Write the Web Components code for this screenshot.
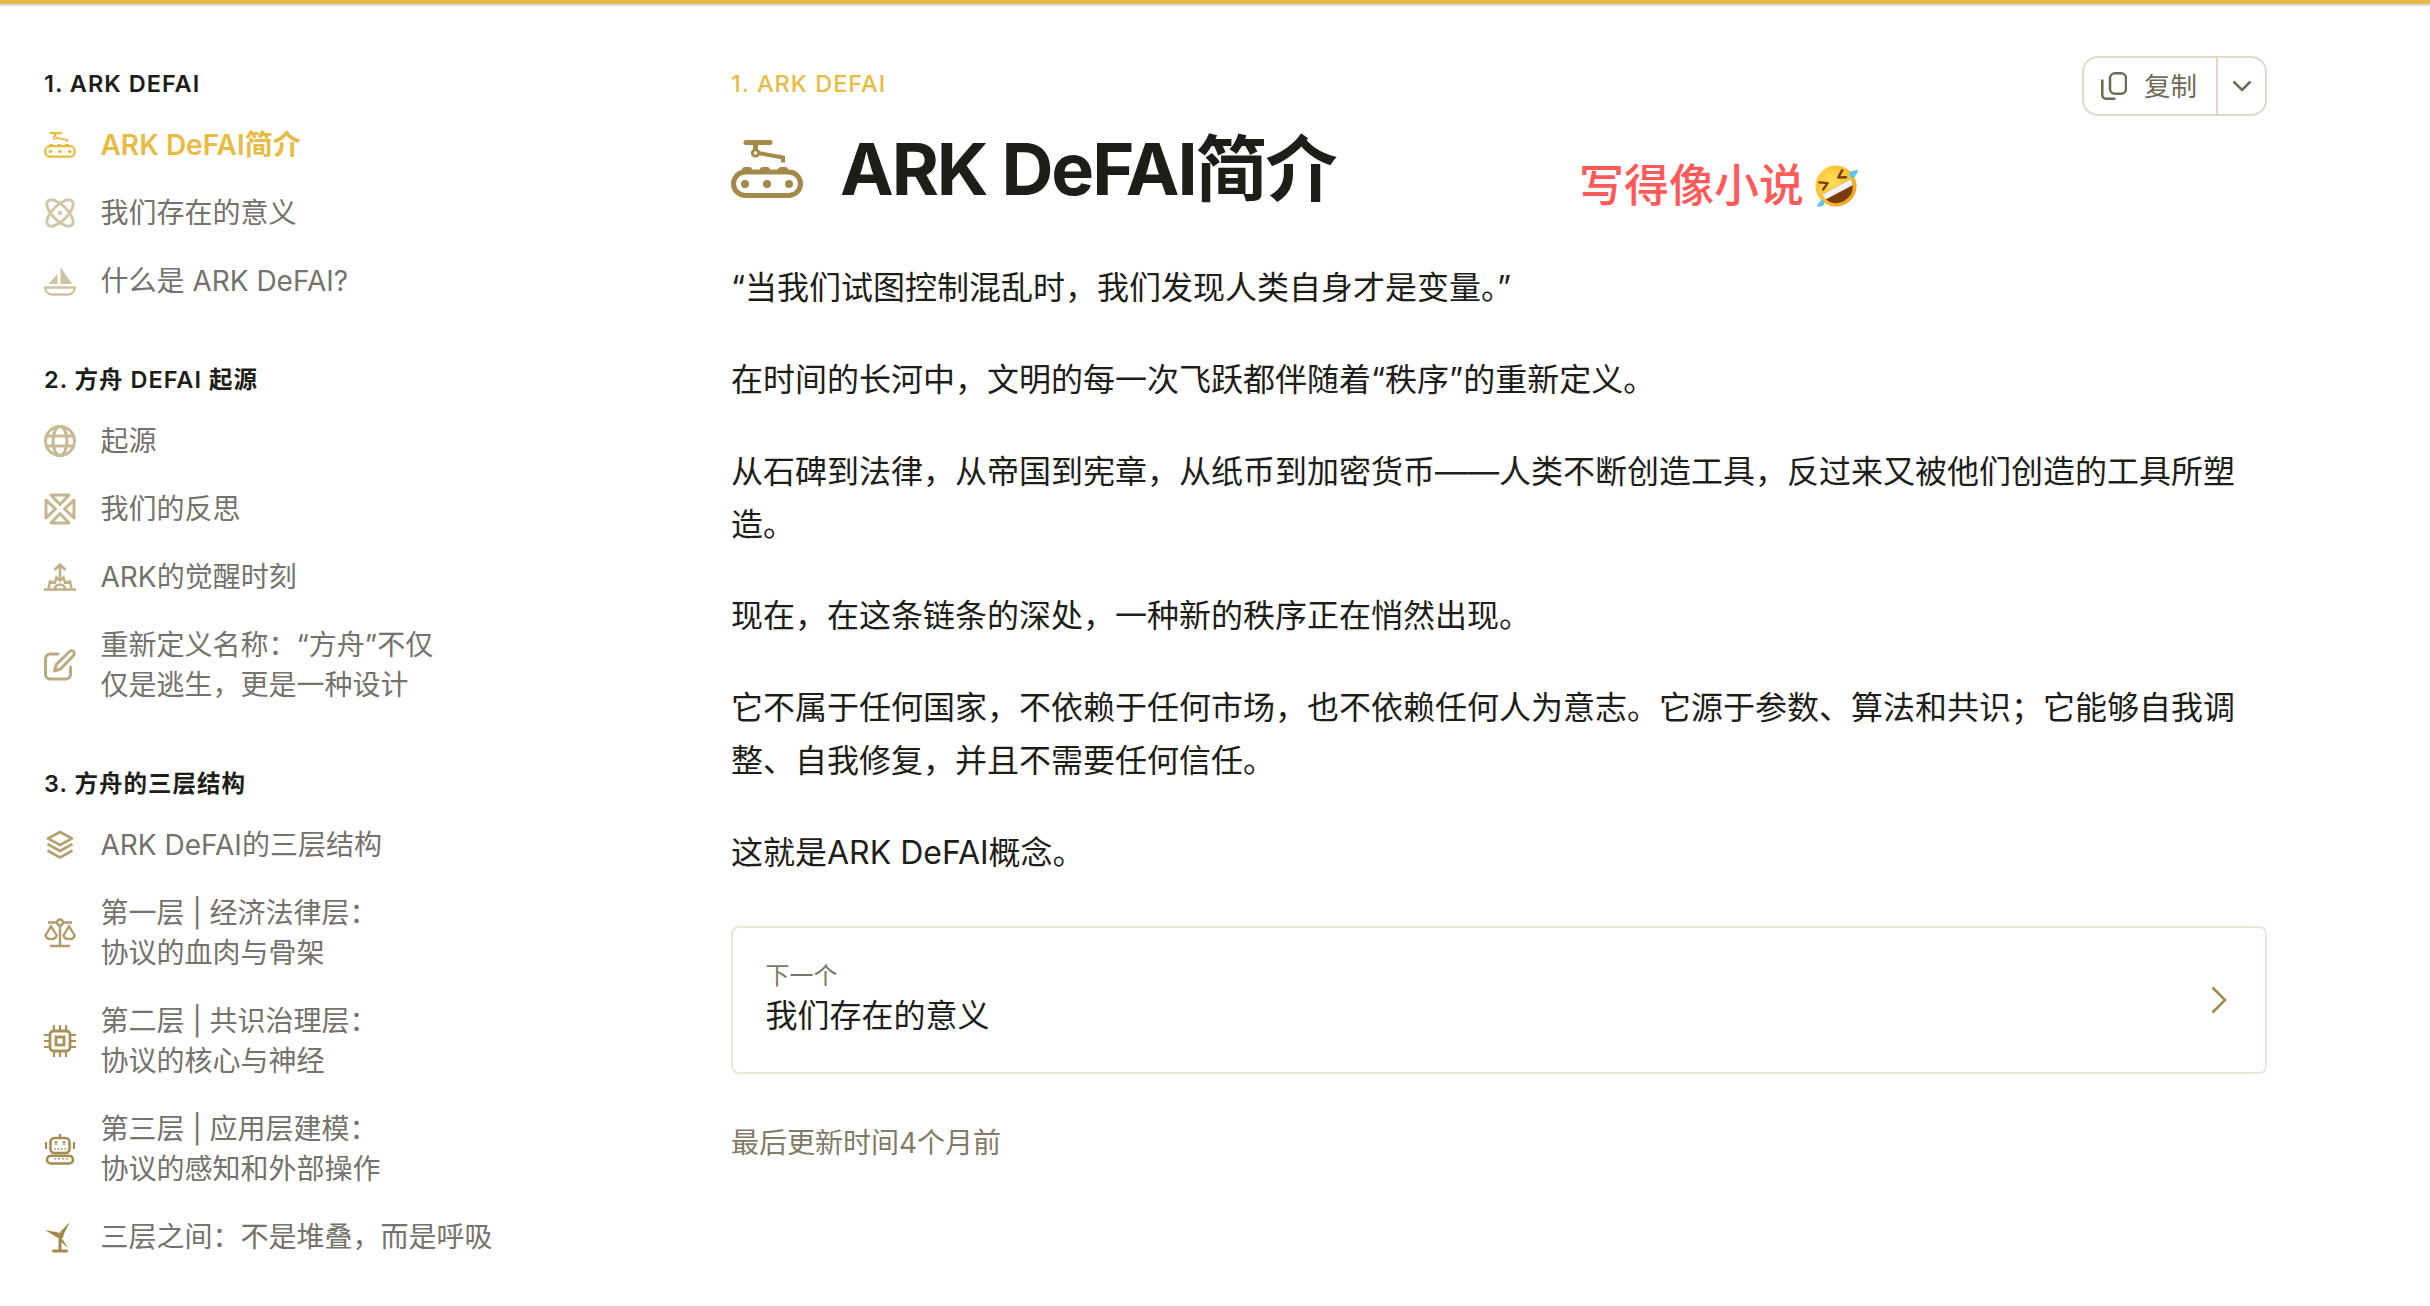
<!DOCTYPE html>
<html lang="zh-CN">
<head>
<meta charset="utf-8">
<title>ARK DeFAI简介</title>
<style>
html,body{margin:0;padding:0;background:#fff;}
body{font-family:Inter,"Noto Sans CJK SC",sans-serif;color:#1e1e19;}
</style>
</head>
<body>
<doc-page>
  <side-nav slot="nav">
    <nav-group label="1. ARK DEFAI">
      <nav-item icon="conveyor" tint="#e8bb42" active>ARK DeFAI简介</nav-item>
      <nav-item icon="atom" tint="#d2c7a9">我们存在的意义</nav-item>
      <nav-item icon="boat" tint="#cfc3a2">什么是 ARK DeFAI?</nav-item>
    </nav-group>
    <nav-group label="2. 方舟 DEFAI 起源">
      <nav-item icon="globe" tint="#c8ba95">起源</nav-item>
      <nav-item icon="cross" tint="#c5b68f">我们的反思</nav-item>
      <nav-item icon="rise" tint="#c0b088">ARK的觉醒时刻</nav-item>
      <nav-item icon="edit" tint="#bcab80" two>重新定义名称：“方舟”不仅<br>仅是逃生，更是一种设计</nav-item>
    </nav-group>
    <nav-group label="3. 方舟的三层结构">
      <nav-item icon="layers" tint="#b5a272">ARK DeFAI的三层结构</nav-item>
      <nav-item icon="scale" tint="#b09c68" two>第一层 | 经济法律层：<br>协议的血肉与骨架</nav-item>
      <nav-item icon="chip" tint="#a8925a" two>第二层 | 共识治理层：<br>协议的核心与神经</nav-item>
      <nav-item icon="robot" tint="#a48c51" two>第三层 | 应用层建模：<br>协议的感知和外部操作</nav-item>
      <nav-item icon="turbine" tint="#a0884a">三层之间：不是堆叠，而是呼吸</nav-item>
    </nav-group>
  </side-nav>
  <doc-article slot="main" eyebrow="1. ARK DEFAI" heading="ARK DeFAI简介">
    <p>“当我们试图控制混乱时，我们发现人类自身才是变量。”</p>
    <p>在时间的长河中，文明的每一次飞跃都伴随着“秩序”的重新定义。</p>
    <p>从石碑到法律，从帝国到宪章，从纸币到加密货币——人类不断创造工具，反过来又被他们创造的工具所塑造。</p>
    <p>现在，在这条链条的深处，一种新的秩序正在悄然出现。</p>
    <p>它不属于任何国家，不依赖于任何市场，也不依赖任何人为意志。它源于参数、算法和共识；它能够自我调整、自我修复，并且不需要任何信任。</p>
    <p>这就是ARK DeFAI概念。</p>
  </doc-article>
</doc-page>

<script>
// all the icons, stroke/fill follow currentColor
const ICONS = {
  conveyor:`<svg viewBox="0 0 72 58" fill="none" stroke="currentColor" stroke-width="5"><path d="M15 2.5h24" stroke-linecap="round"/><path d="M24.5 3v8" /><circle cx="24.5" cy="13" r="3.2" stroke-width="3"/><path d="M27 13l25 4.5v5" stroke-width="4"/><rect x="2.5" y="32" width="67" height="23.5" rx="11.7"/><path d="M11 33v-3a3 3 0 0 1 3-3h4a3 3 0 0 1 3 3v3zM29 33v-3a3 3 0 0 1 3-3h4a3 3 0 0 1 3 3v3zM47 33v-3a3 3 0 0 1 3-3h4a3 3 0 0 1 3 3v3z" fill="currentColor" stroke="none"/><g fill="currentColor" stroke="none"><circle cx="14" cy="44" r="4"/><circle cx="36" cy="44" r="4"/><circle cx="58" cy="44" r="4"/></g></svg>`,
  atom:`<svg viewBox="0 0 32 32" fill="none" stroke="currentColor" stroke-width="3"><ellipse cx="16" cy="16" rx="17" ry="7.500" transform="rotate(45 16 16)"/><ellipse cx="16" cy="16" rx="17" ry="7.500" transform="rotate(-45 16 16)"/><circle cx="16" cy="16" r="2.200" fill="currentColor" stroke="none"/></svg>`,
  boat:`<svg viewBox="0 0 32 32" fill="currentColor"><path d="M16.5 2L28 19H16.5zM13.5 9v10H4.5z"/><path d="M1.300 22.500h29.400c0 4.200-3 7-7 7H8.300c-4 0-7-2.800-7-7z" fill="none" stroke="currentColor" stroke-width="2.500" stroke-linejoin="round"/></svg>`,
  globe:`<svg viewBox="0 0 32 32" fill="none" stroke="currentColor" stroke-width="3"><circle cx="16" cy="16" r="14.500"/><ellipse cx="16" cy="16" rx="7" ry="14.500"/><path d="M2.500 11h27M2.500 21h27"/></svg>`,
  cross:`<svg viewBox="0 0 32 32" fill="none" stroke="currentColor" stroke-width="3" stroke-linejoin="round"><path d="M7 2h18L16 11.500zM7 30h18L16 20.500zM2 7v18L11.500 16zM30 7v18L20.500 16z"/></svg>`,
  rise:`<svg viewBox="0 0 32 32" fill="none" stroke="currentColor" stroke-width="2.600"><path d="M16 19V4M10.500 9L16 3.500 21.500 9"/><path d="M4.500 27l1.500-6.500 5 1 1.500-5 3.500 3 3.500-3 1.500 5 5-1 1.500 6.500"/><path d="M11 28a5 4.500 0 0 1 10 0"/><path d="M0 28.500h32"/></svg>`,
  edit:`<svg viewBox="0 0 32 32" fill="none" stroke="currentColor" stroke-width="3" stroke-linecap="round" stroke-linejoin="round"><path d="M14 5H6a4.500 4.500 0 0 0-4.500 4.500v16A4.500 4.500 0 0 0 6 30h16a4.500 4.500 0 0 0 4.500-4.500V18"/><path d="M10.500 22l1.800-6.500L25.500 2.500a2.800 2.800 0 0 1 4 4L16.500 20z"/></svg>`,
  layers:`<svg viewBox="0 0 32 32" fill="none" stroke="currentColor" stroke-width="2.600" stroke-linejoin="round"><path d="M16 3l12 6.500L16 16 4 9.500z"/><path d="M3.500 15L16 22l12.500-7"/><path d="M3.500 21.500L16 28.500l12.500-7"/></svg>`,
  scale:`<svg viewBox="0 0 32 32" fill="none" stroke="currentColor" stroke-width="2.400" stroke-linejoin="round"><path d="M4 5.500h9M19 5.500h9M16 9v20M6 29h20"/><circle cx="16" cy="5.500" r="3"/><path d="M7 9L1.500 18.500a5.700 4.500 0 0 0 11.200 0zM25 9l-5.500 9.500a5.700 4.500 0 0 0 11.200 0z"/></svg>`,
  chip:`<svg viewBox="0 0 32 32" fill="none" stroke="currentColor" stroke-width="2.800"><rect x="6" y="6" width="20" height="20" rx="3.500"/><rect x="12" y="12" width="8" height="8" stroke-width="2.800"/><path stroke-width="2.200" d="M10 0v5M16 0v5M22 0v5M10 27v5M16 27v5M22 27v5M0 10h5M0 16h5M0 22h5M27 10h5M27 16h5M27 22h5"/></svg>`,
  robot:`<svg viewBox="0 0 32 32" fill="none" stroke="currentColor" stroke-width="2.600"><path d="M16 1v4" stroke-width="2"/><rect x="6.500" y="5" width="19" height="15" rx="4"/><path d="M2 9v7M30 9v7" stroke-width="2"/><path stroke-width="1.600" d="M10.500 8.500l3 3M13.500 8.500l-3 3M18.500 8.500l3 3M21.500 8.500l-3 3M10 16h1.800M13.500 16h1.800M17 16h1.800M20.500 16h1.800"/><rect x="3" y="22.800" width="26" height="7.700" rx="3.800"/><path stroke-width="1.600" d="M11 25v1.500M15 25v1.500M19 25v1.500M23 25v1.500"/></svg>`,
  turbine:`<svg viewBox="0 0 32 32" fill="currentColor"><path d="M26 1L19 14.500 16 11zM1 9l13.500 2.500L14 17zM18 17.500L24 27l-8-7z"/><circle cx="16.500" cy="14.500" r="3"/><path d="M14.500 17h3v12h-3z"/><rect x="8" y="28.500" width="16" height="3" rx="1.500"/></svg>`
}

// left column with the groups
class SideNav extends HTMLElement {
  constructor(){
    super()
    this.attachShadow({mode:'open'})
    this.shadowRoot.innerHTML = `<style>
      :host{display:block;padding:61px 0 0 44px;}
    </style><slot></slot>`
  }
}

class NavGroup extends HTMLElement {
  constructor(){
    super()
    this.attachShadow({mode:'open'})
    this.shadowRoot.innerHTML = `<style>
      :host{display:block;margin-bottom:48px;}
      h5{margin:0 0 10px;font:600 23.500px/34px Inter,"Noto Sans CJK SC",sans-serif;letter-spacing:1px;color:#1e1e19;}
    </style><h5></h5><slot></slot>`
    this.shadowRoot.querySelector('h5').textContent = this.getAttribute('label')
  }
}

class NavItem extends HTMLElement {
  constructor(){
    super()
    this.attachShadow({mode:'open'})
    this.shadowRoot.innerHTML = `<style>
      :host{display:flex;align-items:center;gap:24.500px;min-height:68px;font:400 28px/40px Inter,"Noto Sans CJK SC",sans-serif;color:#73726b;white-space:nowrap;}
      :host([two]){min-height:108px;}
      :host([active]){color:#e8bb42;font-weight:600;}
      .ic{width:32px;height:32px;flex:none;display:flex;align-items:center;}
      .ic svg{width:32px;display:block;}
    </style><span class="ic"></span><span><slot></slot></span>`
    const ic = this.shadowRoot.querySelector('.ic')
    ic.innerHTML = ICONS[this.getAttribute('icon')]
    ic.style.color = this.getAttribute('tint')
  }
}

class CopyButton extends HTMLElement {
  constructor(){
    super()
    this.attachShadow({mode:'open'})
    this.shadowRoot.innerHTML = `<style>
      :host{display:flex;width:185px;height:60px;box-sizing:border-box;border:2px solid #e0d9c6;border-radius:16px;color:#6f6a55;font:400 26.500px/32px Inter,"Noto Sans CJK SC",sans-serif;flex:none;}
      .l{width:134px;display:flex;align-items:center;gap:17px;padding-left:17px;box-sizing:border-box;border-right:2px solid #e0d9c6;}
      .r{flex:1;display:flex;align-items:center;justify-content:center;}
      svg{display:block;}
    </style>
    <div class="l"><svg width="26" height="28" viewBox="0 0 26 28" fill="none" stroke="currentColor" stroke-width="2.500" stroke-linejoin="round"><rect x="9" y="1.300" width="16" height="20.500" rx="5"/><path d="M1.300 7.500v15.700a3.500 3.500 0 0 0 3.500 3.500h9.700"/></svg><span>复制</span></div>
    <div class="r"><svg width="20" height="12" viewBox="0 0 20 12" fill="none" stroke="currentColor" stroke-width="2.500"><path d="M1.500 1.500L10 10l8.500-8.500"/></svg></div>`
  }
}

class NextCard extends HTMLElement {
  constructor(){
    super()
    this.attachShadow({mode:'open'})
    this.shadowRoot.innerHTML = `<style>
      :host{display:flex;align-items:center;justify-content:space-between;height:148px;box-sizing:border-box;border:2px solid #ece5d8;border-radius:8px;padding:0 38px 0 32.500px;}
      .t{padding-bottom:4px;}
      .s{font:400 24px/36px Inter,"Noto Sans CJK SC",sans-serif;color:#7c7762;}
      .b{font:400 32px/44px Inter,"Noto Sans CJK SC",sans-serif;color:#1e1e19;}
    </style>
    <div class="t"><div class="s"><slot name="label"></slot></div><div class="b"><slot name="title"></slot></div></div>
    <svg width="16" height="28" viewBox="0 0 16 28" fill="none" stroke="#a38a4f" stroke-width="2.600"><path d="M1.500 1.500L14 14 1.500 26.500"/></svg>`
  }
}

// red note someone wrote on top of the screenshot
class NoteMark extends HTMLElement {
  constructor(){
    super()
    this.attachShadow({mode:'open'})
    this.shadowRoot.innerHTML = `<style>
      :host{position:absolute;left:848px;top:155px;display:flex;align-items:center;gap:9px;font:500 45px/50px Inter,"Noto Sans CJK SC",sans-serif;color:#ff5a5a;white-space:nowrap;}
      svg{display:block;}
    </style><span><slot></slot></span>
    <svg width="46" height="46" viewBox="0 0 46 46">
      <defs><radialGradient id="f" cx="45%" cy="35%" r="70%"><stop offset="0" stop-color="#ffdf5c"/><stop offset=".7" stop-color="#fbbf2c"/><stop offset="1" stop-color="#ee8f12"/></radialGradient></defs>
      <g transform="rotate(-28 23 23)">
        <circle cx="23" cy="23" r="20.500" fill="url(#f)"/>
        <path d="M7 24h32c0 10-7 16-16 16S7 34 7 24z" fill="#7a3c0c"/>
        <path d="M7 24h32c0 3-.4 4.500-1 6H8c-.6-1.500-1-3-1-6z" fill="#f4f4f4"/>
        <path d="M10 12l7 4.500-7 3.500M36 12l-7 4.500 7 3.500" fill="none" stroke="#7a3c0c" stroke-width="2.400" stroke-linecap="round" stroke-linejoin="round"/>
      </g>
      <path d="M37 9c3-1.500 6-2 8-2-.5 3-2 6-4 7.500-2.500 1.500-6-2-4-5.500z" fill="#5cc4ef"/>
      <path d="M9 37c-2.500 1.500-4.500 4-5 6.500 2.700.5 5.700 0 7-2 1.500-2.300-.300-5-2-4.500z" fill="#5cc4ef"/>
    </svg>`
  }
}

class DocArticle extends HTMLElement {
  constructor(){
    super()
    this.attachShadow({mode:'open'})
    this.shadowRoot.innerHTML = `<style>
      :host{display:block;position:relative;padding-top:50px;font:400 32px/53px Inter,"Noto Sans CJK SC",sans-serif;color:#1e1e19;}
      header{display:flex;justify-content:space-between;align-items:flex-start;margin-bottom:48px;}
      .eb{margin:11px 0 24px;font:500 23.500px/34px Inter,"Noto Sans CJK SC",sans-serif;letter-spacing:1px;color:#e8bb42;}
      .tl{display:flex;align-items:center;gap:37px;}
      .tl svg{display:block;width:72px;height:58px;color:#a38a4a;}
      h1{margin:0;font:700 72px/88px Inter,"Noto Sans CJK SC",sans-serif;color:#1e1e19;letter-spacing:-2.100px;}
      ::slotted(p){margin:0 0 38.800px;}
      next-card{margin-top:47px;}
      .upd{margin-top:49px;font:400 28px/40px Inter,"Noto Sans CJK SC",sans-serif;color:#807b66;}
    </style>
    <header>
      <div>
        <div class="eb"></div>
        <div class="tl">${ICONS.conveyor}<h1></h1></div>
      </div>
      <copy-button></copy-button>
    </header>
    <note-mark>写得像小说</note-mark>
    <slot></slot>
    <next-card><span slot="label">下一个</span><span slot="title">我们存在的意义</span></next-card>
    <div class="upd">最后更新时间4个月前</div>`
    this.shadowRoot.querySelector('.eb').textContent = this.getAttribute('eyebrow')
    this.shadowRoot.querySelector('h1').textContent = this.getAttribute('heading')
  }
}

class DocPage extends HTMLElement {
  constructor(){
    super()
    this.attachShadow({mode:'open'})
    this.shadowRoot.innerHTML = `<style>
      :host{display:block;border-top:4px solid #e8bb42;}
      .line{height:2px;background:#dcdcdc;}
      .cols{display:grid;grid-template-columns:731px 1536px;}
    </style><div class="line"></div>
    <div class="cols"><div><slot name="nav"></slot></div><div><slot name="main"></slot></div></div>`
  }
}

customElements.define('side-nav',SideNav)
customElements.define('nav-group',NavGroup)
customElements.define('nav-item',NavItem)
customElements.define('copy-button',CopyButton)
customElements.define('next-card',NextCard)
customElements.define('note-mark',NoteMark)
customElements.define('doc-article',DocArticle)
customElements.define('doc-page',DocPage)
</script>
</body>
</html>
